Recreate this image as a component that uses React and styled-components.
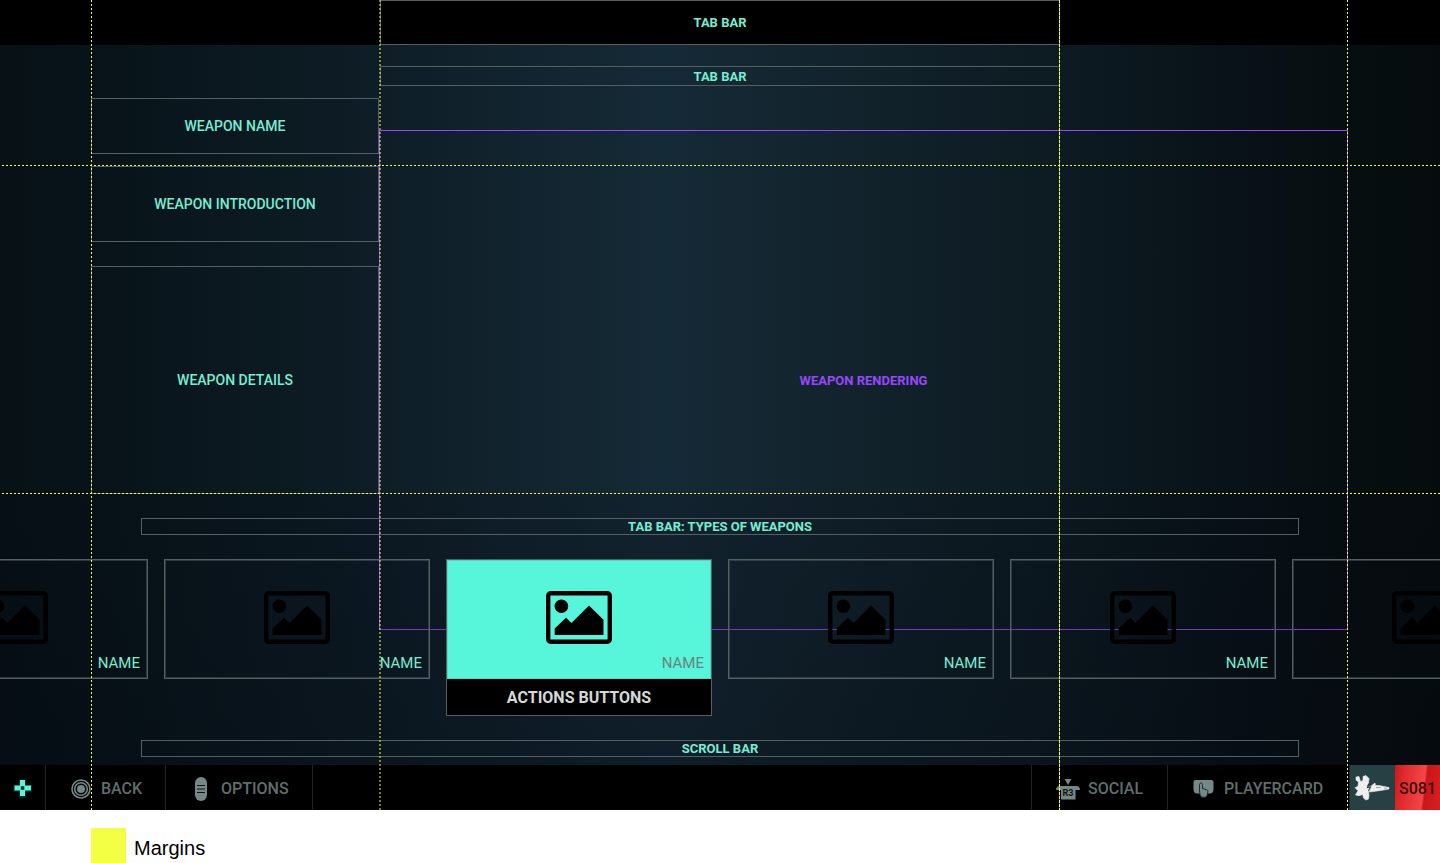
import React, { useState } from 'react'
import styled, { createGlobalStyle } from 'styled-components'

const GlobalStyle = createGlobalStyle`
:root {
    --black: #000;
    --mint: #75eed3;
    --aqua: #57f5da;
    --line: #536062;
    --violet: #9747ff;
    --guide: #f2ff43;
    --slate: #5f6e6d;
    --icon: #748886;
}

* {
    box-sizing: border-box;
}

body {
    margin: 0;
    background-color: #fff;
    font-family: Roboto, "Liberation Sans", sans-serif;
}

button {
    border: none;
    padding: 0;
    background: none;
    font: inherit;
    cursor: pointer;
}
`

const Screen = styled.main`
position: relative;
overflow: hidden;
display: flex;
flex-direction: column;
background: linear-gradient(90deg, #071116 0%, #08141a 8%, #0e1d26 26%, #152a37 46%, #13252f 55%, #0d1b22 73%, #091219 85%, #070e10 94%, #060c0e 100%);
`

const Frame = styled.div`
display: flex;
align-items: center;
justify-content: center;
border: 1px solid var(--line);
color: var(--mint);
font-size: ${({ $regular }) => $regular ? '14px' : '13px'};
font-weight: ${({ $regular }) => $regular ? 500 : 700};
line-height: 15px;
`

const TopBar = styled.header`
background-color: var(--black);
padding: 0 380px;

${Frame} {
    height: 45px;
}
`

const SubBar = styled.nav`
padding: 21px 380px 12px;

${Frame} {
    height: 20px;
}
`

const Workspace = styled.div`
display: grid;
grid-template-columns: 91px 288px 1fr 92px;
grid-template-rows: auto auto;
`

const Sidebar = styled.aside`
grid-area: 1 / 2 / 2 / 3;
display: grid;
grid-template-rows: 56px 76px 240px;
row-gap: 12px;

${Frame}:last-child {
    margin-top: 12px;
}
`

const Rendering = styled.section`
grid-area: 1 / 3 / 3 / 4;
display: flex;
align-items: center;
justify-content: center;
margin: 32px 0 135px;
border: 1px solid var(--violet);
border-bottom-color: #7438c4;
color: var(--violet);
font-size: 13px;
font-weight: 700;
z-index: 1;
pointer-events: none;
`

const Picker = styled.section`
grid-area: 2 / 1 / 3 / 5;
min-width: 0;
display: flex;
flex-direction: column;
gap: 24px;
padding: 24px 0 8px;
background: linear-gradient(180deg, rgba(3, 7, 16, 0.2), rgba(3, 7, 16, 0.35));

& > ${Frame} {
    height: 17px;
    margin: 0 141px;
}
`

const Cards = styled.div`
display: flex;
align-items: flex-start;
justify-content: center;
gap: 16px;
height: 157px;
overflow: hidden;
`

const Card = styled.article`
flex: none;
width: 266px;
border: 1px solid var(--line);
position: relative;
z-index: ${({ $active }) => $active ? 2 : 'auto'};
background-color: ${({ $active }) => $active ? 'var(--black)' : 'transparent'};
`

const CardFace = styled.button`
display: flex;
flex-direction: column;
align-items: center;
justify-content: space-between;
width: 100%;
height: ${({ $active }) => $active ? 119 : 118}px;
padding: 31px 7px ${({ $active }) => $active ? 7 : 6}px;
background-color: ${({ $active }) => $active ? 'var(--aqua)' : 'transparent'};
color: ${({ $active }) => $active ? '#6c827f' : 'var(--mint)'};
font-size: 15px;
line-height: 18px;
box-shadow: inset 0 0 0 1px rgba(83, 96, 98, ${({ $active }) => $active ? 0.2 : 0.5});

svg {
    width: 66px;
    height: 53px;
    position: relative;
    z-index: 2;
}

span {
    align-self: flex-end;
}
`

const Actions = styled.div`
height: 36px;
display: flex;
align-items: center;
justify-content: center;
color: #d5d8d7;
font-size: 16px;
font-weight: 700;
`

const Footer = styled.footer`
display: flex;
height: 45px;
background-color: var(--black);
`

const FooterButton = styled.button`
display: flex;
align-items: center;
gap: ${({ $gap }) => $gap || 8}px;
width: ${({ $width }) => $width}px;
padding: 2px 0 0 ${({ $inset }) => $inset || 25}px;
border-right: 1px solid #202424;
color: var(--slate);
font-size: 16px;
font-weight: 500;

svg {
    flex: none;
}
`

const Spacer = styled.div`
flex: 1;
border-right: 1px solid #202424;
`

const Emblem = styled.div`
width: 45px;
display: flex;
align-items: center;
justify-content: center;
background-color: #264043;
`

const Tag = styled.div`
width: 45px;
display: flex;
align-items: center;
justify-content: center;
padding-top: 2px;
background: linear-gradient(97deg, #c81a1c 0%, #e02a2b 20%, #f34745 62%, #c91617 66%, #d82021 100%);
color: #3a1013;
font-size: 16px;
font-weight: 500;
`

const Guide = styled.i`
position: absolute;
z-index: 3;
pointer-events: none;
`

const VerticalGuide = styled(Guide)`
top: 0;
bottom: 0;
${({ $side, $offset }) => `${$side}: ${$offset}px;`}
width: ${({ $soft }) => $soft ? 2 : 1}px;
opacity: ${({ $soft }) => $soft ? 0.5 : 1};
background: ${({ $dense }) => $dense
    ? 'repeating-linear-gradient(180deg, var(--guide) 0 3px, rgba(242, 255, 67, 0.3) 3px 4px)'
    : 'repeating-linear-gradient(180deg, var(--guide) 0 2px, transparent 2px 4px)'};
`

const HorizontalGuide = styled(Guide)`
left: 2px;
right: 0;
top: ${({ $offset }) => $offset}px;
height: 1px;
background: repeating-linear-gradient(90deg, var(--guide) 0 2px, transparent 2px 4px);
`

const Legend = styled.div`
display: flex;
align-items: center;
gap: 8px;
padding: 18px 0 0 91px;
color: var(--black);
font-family: "Liberation Sans", Arial, sans-serif;
font-size: 20px;
line-height: 30px;

&::before {
    content: "";
    width: 35px;
    height: 35px;
    background-color: var(--guide);
}

span {
    padding-top: 5px;
}
`

const PictureIcon = () => (
    <svg viewBox="0 0 66 53" aria-hidden="true">
        <rect x="2.2" y="2.2" width="61.6" height="48.6" rx="2.5" fill="none" stroke="#000" strokeWidth="4.4" />
        <circle cx="15.4" cy="15.3" r="6.8" />
        <path d="M8.7 44V37.500L20 26.700L25.500 32L43 14.500L57.500 28.700V44Z" />
    </svg>
)

const PadIcon = () => (
    <svg width="20" height="20" viewBox="0 0 20 20" aria-hidden="true">
        <path d="M6 .5h7v5.500h6v7h-6v6H6v-6H.5V6H6z" fill="#174c45" opacity=".5" />
        <path fillRule="evenodd" d="M7 1h5v5.500h6v5h-6V17H7v-5.500H1.500v-5H7zM7.800 7.300v3.500h3.500V7.300z" fill="#57f5da" />
    </svg>
)

const TargetIcon = () => (
    <svg width="20" height="20" viewBox="0 0 20 20" fill="none" stroke="#748886" aria-hidden="true">
        <circle cx="10" cy="10" r="9" strokeWidth="1.6" />
        <circle cx="10" cy="10" r="6.3" strokeWidth="1.6" />
        <circle cx="10" cy="10" r="4" fill="#748886" stroke="none" />
    </svg>
)

const MenuIcon = () => (
    <svg width="12" height="24" viewBox="0 0 12 24" aria-hidden="true">
        <rect width="12" height="24" rx="6" fill="#748886" />
        <path d="M2 8.500h8M2 12h8M2 15.500h8" stroke="#111" strokeWidth="1" />
    </svg>
)

const StickIcon = () => (
    <svg width="24" height="22" viewBox="0 0 24 22" aria-hidden="true">
        <path d="M8.500 1h7L12 7z" fill="#748886" />
        <path d="M4 8h16c2.500 0 4 1.500 4 4h-4.500v9.500H5V12H0c0-2.500 1.500-4 4-4z" fill="#748886" />
        <text x="12" y="18" textAnchor="middle" fontSize="9" fontWeight="700" fill="#101414">R3</text>
    </svg>
)

const TouchIcon = () => (
    <svg width="21" height="19" viewBox="0 0 21 19" aria-hidden="true">
        <path d="M2.500 1h16c1.500 0 2 1 2 2.500v7c0 2.500-1.500 4-3.500 4H4c-2 0-3.500-1.500-3.500-4v-7C.5 2 1 1 2.500 1z" fill="#748886" />
        <path d="M6.500 5.500c0-2 3-2 3 0v4l4 1.200c1.200.3 1.500 1 1.300 2.300l-.8 3.500-1.500 1.700H8.500L7 15.500 6.500 12z" fill="#748886" stroke="#202c2b" strokeWidth="1" />
    </svg>
)

const JetIcon = () => (
    <svg width="37" height="28" viewBox="0 0 37 28" aria-hidden="true">
        <path d="M2 3L5 2.500L6.500 7.500L9 6.500V2.500L12 1.500L15 4.500L14.500 9L12.500 12.500H16.500L21 9L21.500 11.500H25L35 13.500V15L26.500 16.500L17.500 17.800H14.500L15 21L14.500 25L11.800 26L9.500 24L8.700 20.500L5 21.700L1.500 21L4 16.700L1 13.700L4 12.300L4.500 8L2 6Z" fill="#eef0ef" stroke="#eef0ef" strokeWidth=".6" strokeLinejoin="round" />
        <path d="M15 10L13.500 13.500L16.500 13L14.500 17" fill="none" stroke="#263f42" strokeWidth="1.1" />
        <path d="M22 13.500h5M30 14.300h3" stroke="#7c8d8e" strokeWidth=".7" />
    </svg>
)

const weapons = ['NAME', 'NAME', 'NAME', 'NAME', 'NAME', '']

const App = () => {
    const [active, setActive] = useState(2)

    return (
        <>
            <GlobalStyle />
            <Screen>
                <TopBar>
                    <Frame>TAB BAR</Frame>
                </TopBar>
                <SubBar>
                    <Frame>TAB BAR</Frame>
                </SubBar>
                <Workspace>
                    <Sidebar>
                        <Frame $regular>WEAPON NAME</Frame>
                        <Frame $regular>WEAPON INTRODUCTION</Frame>
                        <Frame $regular>WEAPON DETAILS</Frame>
                    </Sidebar>
                    <Rendering>WEAPON RENDERING</Rendering>
                    <Picker>
                        <Frame>TAB BAR: TYPES OF WEAPONS</Frame>
                        <Cards>
                            {weapons.map((name, i) => (
                                <Card key={i} $active={i === active}>
                                    <CardFace $active={i === active} onClick={() => setActive(i)}>
                                        <PictureIcon />
                                        <span>{name}</span>
                                    </CardFace>
                                    {i === active && <Actions>ACTIONS BUTTONS</Actions>}
                                </Card>
                            ))}
                        </Cards>
                        <Frame>SCROLL BAR</Frame>
                    </Picker>
                </Workspace>
                <Footer>
                    <FooterButton $width={46} $inset={13}><PadIcon /></FooterButton>
                    <FooterButton $width={120} $gap={10}><TargetIcon />BACK</FooterButton>
                    <FooterButton $width={147} $inset={29} $gap={14}><MenuIcon />OPTIONS</FooterButton>
                    <Spacer />
                    <FooterButton $width={136} $inset={24}><StickIcon />SOCIAL</FooterButton>
                    <FooterButton $width={182} $gap={10}><TouchIcon />PLAYERCARD</FooterButton>
                    <Emblem><JetIcon /></Emblem>
                    <Tag>S081</Tag>
                </Footer>
                <VerticalGuide $side="left" $offset={91} />
                <VerticalGuide $side="left" $offset={379} $soft />
                <VerticalGuide $side="right" $offset={380} $dense />
                <VerticalGuide $side="right" $offset={92} />
                <HorizontalGuide $offset={165} />
                <HorizontalGuide $offset={493} />
            </Screen>
            <Legend><span>Margins</span></Legend>
        </>
    )
}

export default App
